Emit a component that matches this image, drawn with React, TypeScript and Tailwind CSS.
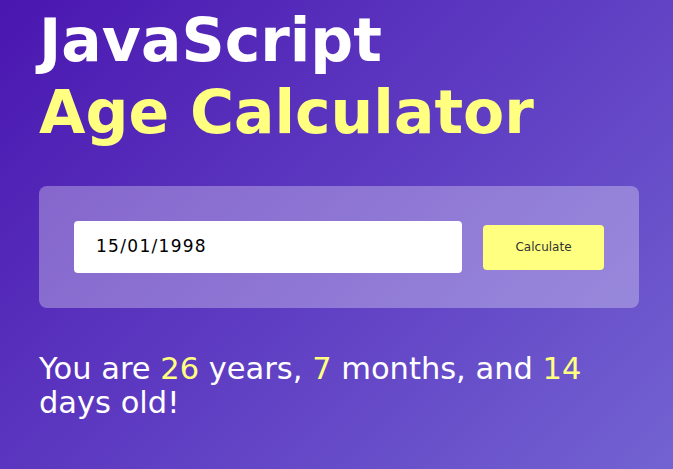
export default function App() {
  return (
    <div
      className="min-h-screen w-full bg-[linear-gradient(135deg,#4a16b0_0%,#5e3cc2_50%,#7363d2_100%)] px-[39px] pt-[4px] text-white"
      style={{ fontFamily: '"DejaVu Sans", Verdana, sans-serif' }}
    >
      <h1 className="text-[60px] font-bold leading-[72px]">
        <span className="block text-white">JavaScript</span>
        <span className="block text-[#ffff80]">Age Calculator</span>
      </h1>
      <div className="mt-[38px] flex w-[600px] items-center gap-[21px] rounded-[8px] bg-white/30 px-[35px] py-[35px]">
        <div className="flex h-[52px] w-[388px] items-center rounded-[4px] bg-white pl-[22px] text-[17px] tracking-[1.3px] text-black">
          15/01/1998
        </div>
        <button className="h-[45px] w-[121px] rounded-[4px] bg-[#ffff80] text-[12px] text-[#333]">
          Calculate
        </button>
      </div>
      <p className="mt-[44px] w-[600px] text-[30.5px] leading-[34px]">
        You are <span className="text-[#ffff80]">26</span> years,{" "}
        <span className="text-[#ffff80]">7</span> months, and{" "}
        <span className="text-[#ffff80]">14</span> days old!
      </p>
    </div>
  );
}
